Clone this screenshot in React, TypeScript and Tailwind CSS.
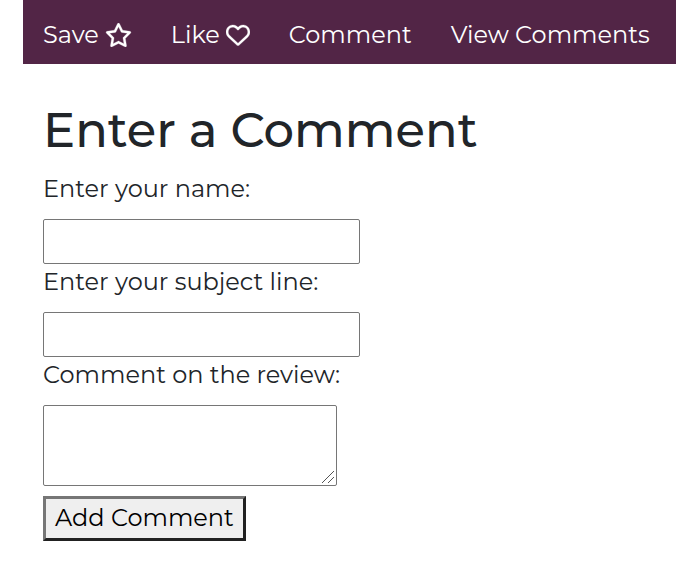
import { FaRegHeart, FaRegStar } from "react-icons/fa6";

const linkClass = "flex items-center gap-1.5 whitespace-nowrap leading-9";
const labelClass = "mb-3 block leading-9";
const fieldClass = "block rounded-[2px] border border-[#767676] bg-white px-1";

export default function App() {
  return (
    <div className="bg-white pl-[23px] font-['Montserrat',Inter,sans-serif] text-2xl text-[#212529]">
      <nav className="flex h-16 items-center gap-[39px] overflow-hidden bg-[#522546] pt-1.5 pl-5 text-white">
        <a href="#save" className={linkClass}>
          Save <FaRegStar className="h-6 w-[27px] stroke-[6px]" />
        </a>
        <a href="#like" className={linkClass}>
          Like <FaRegHeart className="size-6 stroke-[6px]" />
        </a>
        <a href="#comment" className={linkClass}>
          Comment
        </a>
        <a href="#comments" className={linkClass}>
          View Comments
        </a>
      </nav>
      <main className="px-5 pt-[37px]">
        <h1 className="mb-3 text-5xl leading-[58px] font-medium">Enter a Comment</h1>
        <form>
          <label htmlFor="name" className={labelClass}>
            Enter your name:
          </label>
          <input id="name" type="text" className={`${fieldClass} h-[45px] w-[317px]`} />
          <label htmlFor="subject" className={labelClass}>
            Enter your subject line:
          </label>
          <input id="subject" type="text" className={`${fieldClass} h-[45px] w-[317px]`} />
          <label htmlFor="review" className={labelClass}>
            Comment on the review:
          </label>
          <div className="relative w-fit">
            <textarea id="review" className={`${fieldClass} h-[81px] w-[294px] resize-none`} />
            <svg
              className="absolute right-[3px] bottom-[3px] size-3"
              viewBox="0 0 12 12"
              stroke="#555"
              aria-hidden="true"
            >
              <path d="M0 12L12 0M6 12L12 6" />
            </svg>
          </div>
          <button
            type="button"
            className="mt-[10px] h-[45px] border-3 border-t-[#767676] border-r-[#212121] border-b-[#212121] border-l-[#767676] bg-[#efefef] px-[9px] pb-0.5 leading-9 text-black"
          >
            Add Comment
          </button>
        </form>
      </main>
    </div>
  );
}
